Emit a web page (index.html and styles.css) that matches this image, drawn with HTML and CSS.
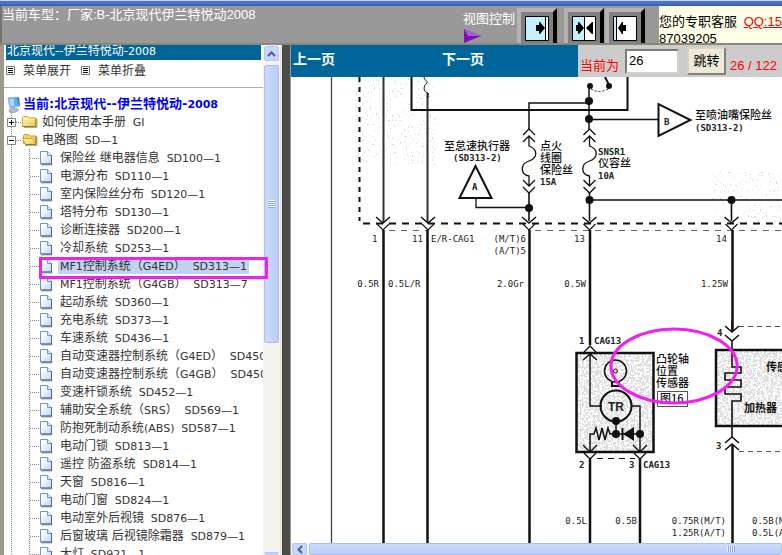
FILE: index.html
```html
<!DOCTYPE html>
<html lang="zh-CN">
<head>
<meta charset="utf-8">
<title>北京现代--伊兰特悦动-2008</title>
<link rel="stylesheet" href="styles.css">
</head>
<body>
<svg class="sprites" aria-hidden="true">
  <defs>
    <linearGradient id="paper" x1="0" y1="0" x2="1" y2="1">
      <stop offset="0.2" stop-color="#ffffff"/><stop offset="1" stop-color="#b5d6fb"/>
    </linearGradient>
    <linearGradient id="gold" x1="0" y1="0" x2="1" y2="1">
      <stop offset="0" stop-color="#fff6b0"/><stop offset="1" stop-color="#f3c843"/>
    </linearGradient>
    <symbol id="file" viewBox="0 0 16 16">
      <path d="M1.5 14.5h11" stroke="#aaa" stroke-width="2"/>
      <path d="M.5 1.500h7l4 4v8.500H.5z" fill="url(#paper)" stroke="#7191cd"/>
      <path d="M7.500 1.500v4h4" fill="#dbe8fb" stroke="#6f94d8"/>
      <path d="M11.500 5v9H1" fill="none" stroke="#5a6298"/>
    </symbol>
    <symbol id="folder" viewBox="0 0 16 16">
      <path d="M2 13.500h13V5" fill="none" stroke="#aaa"/>
      <path d="M.5 12.500v-9l1-1h4l1.500 1.500h6.500v8.500z" fill="url(#gold)" stroke="#d0a637"/>
      <path d="M1 5.500h12" stroke="#fffbd8"/>
      <path d="M1 12.500h13v-8" fill="none" stroke="#9c7a22"/>
    </symbol>
    <symbol id="folder-open" viewBox="0 0 16 16">
      <path d="M3 13.500h12V5" fill="none" stroke="#aaa"/>
      <path d="M1.500 11.500v-8l1-1h4l1.500 1.500h6v8.500z" fill="#f3d36a" stroke="#c59a30"/>
      <path d="M.5 6.500h10l3 6H3.500z" fill="url(#gold)" stroke="#d0a637"/>
      <path d="M3.500 12.500h10.500v-8" fill="none" stroke="#9c7a22"/>
    </symbol>
    <symbol id="lines" viewBox="0 0 9 9">
      <path d="M.5.5h8v8h-8z" fill="#fff" stroke="#777"/>
      <path d="M2 2.500h5M2 4.500h5M2 6.500h5" stroke="#111"/>
    </symbol>
  </defs>
</svg>

<div class="strip"></div>
<header class="top">
  <p class="model">当前车型：厂家:B-北京现代伊兰特悦动2008</p>
  <div class="view">
    <span>视图控制</span>
    <svg width="19" height="14" viewBox="0 0 19 14"><path d="M1 0l17 7-17 7z" fill="#7a12b4"/><path d="M1 0l17 7H5z" fill="#a95fd6"/></svg>
  </div>
  <div class="modes">
    <button class="mode" aria-label="显示目录">
      <svg width="24" height="25" viewBox="0 0 24 25"><path d="M.5.500h23v24H.5z" fill="#c3efff" stroke="#000"/><path d="M20 1h3v23h-3z" fill="#fff"/><path d="M20.500 0v25" stroke="#000"/><path d="M11 9h3V6h1l5 6-5 6h-1v-3h-3z"/></svg>
    </button>
    <button class="mode mode-split" aria-label="分栏显示">
      <svg width="24" height="25" viewBox="0 0 24 25"><path d="M.5.500h23v24H.5z" fill="#fff" stroke="#000"/><path d="M1 1h11v23H1z" fill="#c3efff"/><path d="M12.500 0v25" stroke="#000"/><path d="M4 9h2V6h1l5 6-5 6H6v-3H4zM21 6v12h-1l-6-6 6-6z"/></svg>
    </button>
    <button class="mode" aria-label="隐藏目录">
      <svg width="24" height="25" viewBox="0 0 24 25"><path d="M.5.500h23v24H.5z" fill="#fff" stroke="#000"/><path d="M1 1h2v23H1z" fill="#c3efff"/><path d="M3.500 0v25" stroke="#000"/><path d="M13 9h-3V6H9l-4 6 4 6h1v-3h3z"/></svg>
    </button>
  </div>
  <div class="service">
    <p>您的专职客服 <a href="#qq">QQ:15</a></p>
    <p>87039205</p>
  </div>
</header>

<main class="frames">
  <nav class="side">
    <div class="pane">
      <h1 class="side-title">北京现代--伊兰特悦动-<span class="en">2008</span></h1>
      <div class="tools">
        <svg width="9" height="9"><use href="#lines"/></svg><a href="#open">菜单展开</a>
        <svg width="9" height="9"><use href="#lines"/></svg><a href="#fold">菜单折叠</a>
      </div>
      <ul class="tree">
        <li class="root">
          <svg width="14" height="17" viewBox="0 0 14 17"><path d="M3 13l6-1 3 2-5 3-5-1z" fill="#b9b9c4" stroke="#8a8a98" stroke-width=".6"/><path d="M1 2l9-1 2 9-9 2z" fill="#5bb0ee" stroke="#9ab7d4"/><path d="M2.500 3l4-.5 1 7-4 1z" fill="#a8dcfb"/><path d="M10 1l2 .5 1 8-1 .5z" fill="#3868b4"/></svg>
          <b>当前:北京现代--伊兰特悦动-<span class="en">2008</span></b>
        </li>
        <li class="book"><span class="toggle"><svg width="9" height="9" viewBox="0 0 9 9"><path d="M.5.500h8v8h-8z" fill="#fff" stroke="#848484"/><path d="M2 4.500h5M4.500 2v5" stroke="#000"/></svg></span><svg width="16" height="16"><use href="#folder"/></svg><a href="#gi">如何使用本手册 <span class="en">GI</span></a></li>
        <li class="book"><span class="toggle"><svg width="9" height="9" viewBox="0 0 9 9"><path d="M.5.500h8v8h-8z" fill="#fff" stroke="#848484"/><path d="M2 4.500h5" stroke="#000"/></svg></span><svg width="16" height="16"><use href="#folder-open"/></svg><a href="#sd1">电路图 <span class="en">SD—1</span></a></li>
        <li class="leaf"><svg width="16" height="16"><use href="#file"/></svg><a href="#1">保险丝 继电器信息 <span class="en">SD100—1</span></a></li>
        <li class="leaf"><svg width="16" height="16"><use href="#file"/></svg><a href="#2">电源分布 <span class="en">SD110—1</span></a></li>
        <li class="leaf"><svg width="16" height="16"><use href="#file"/></svg><a href="#3">室内保险丝分布 <span class="en">SD120—1</span></a></li>
        <li class="leaf"><svg width="16" height="16"><use href="#file"/></svg><a href="#4">塔特分布 <span class="en">SD130—1</span></a></li>
        <li class="leaf"><svg width="16" height="16"><use href="#file"/></svg><a href="#5">诊断连接器 <span class="en">SD200—1</span></a></li>
        <li class="leaf"><svg width="16" height="16"><use href="#file"/></svg><a href="#6">冷却系统 <span class="en">SD253—1</span></a></li>
        <li class="leaf"><svg width="16" height="16"><use href="#file"/></svg><a href="#7" class="current"><span class="en">MF1</span>控制系统（<span class="en">G4ED</span>） <span class="en">SD313—1</span></a></li>
        <li class="leaf"><svg width="16" height="16"><use href="#file"/></svg><a href="#8"><span class="en">MF1</span>控制系统（<span class="en">G4GB</span>） <span class="en">SD313—7</span></a></li>
        <li class="leaf"><svg width="16" height="16"><use href="#file"/></svg><a href="#9">起动系统 <span class="en">SD360—1</span></a></li>
        <li class="leaf"><svg width="16" height="16"><use href="#file"/></svg><a href="#10">充电系统 <span class="en">SD373—1</span></a></li>
        <li class="leaf"><svg width="16" height="16"><use href="#file"/></svg><a href="#11">车速系统 <span class="en">SD436—1</span></a></li>
        <li class="leaf"><svg width="16" height="16"><use href="#file"/></svg><a href="#12">自动变速器控制系统（<span class="en">G4ED</span>） <span class="en">SD450—1</span></a></li>
        <li class="leaf"><svg width="16" height="16"><use href="#file"/></svg><a href="#13">自动变速器控制系统（<span class="en">G4GB</span>） <span class="en">SD450—7</span></a></li>
        <li class="leaf"><svg width="16" height="16"><use href="#file"/></svg><a href="#14">变速杆锁系统 <span class="en">SD452—1</span></a></li>
        <li class="leaf"><svg width="16" height="16"><use href="#file"/></svg><a href="#15">辅助安全系统（<span class="en">SRS</span>） <span class="en">SD569—1</span></a></li>
        <li class="leaf"><svg width="16" height="16"><use href="#file"/></svg><a href="#16">防抱死制动系统<span class="en">(ABS)</span> <span class="en">SD587—1</span></a></li>
        <li class="leaf"><svg width="16" height="16"><use href="#file"/></svg><a href="#17">电动门锁 <span class="en">SD813—1</span></a></li>
        <li class="leaf"><svg width="16" height="16"><use href="#file"/></svg><a href="#18">遥控 防盗系统 <span class="en">SD814—1</span></a></li>
        <li class="leaf"><svg width="16" height="16"><use href="#file"/></svg><a href="#19">天窗 <span class="en">SD816—1</span></a></li>
        <li class="leaf"><svg width="16" height="16"><use href="#file"/></svg><a href="#20">电动门窗 <span class="en">SD824—1</span></a></li>
        <li class="leaf"><svg width="16" height="16"><use href="#file"/></svg><a href="#21">电动室外后视镜 <span class="en">SD876—1</span></a></li>
        <li class="leaf"><svg width="16" height="16"><use href="#file"/></svg><a href="#22">后窗玻璃 后视镜除霜器 <span class="en">SD879—1</span></a></li>
        <li class="leaf"><svg width="16" height="16"><use href="#file"/></svg><a href="#23">大灯 <span class="en">SD921—1</span></a></li>
      </ul>
    </div>
    <div class="vbar">
      <span class="arrow"><svg width="9" height="6" viewBox="0 0 9 6"><path d="M1 5l3.500-3.500L8 5" fill="none" stroke="#4d6185" stroke-width="2"/></svg></span>
      <span class="vthumb"><i class="vgrip"></i></span>
      <span class="arrow arrow-down"></span>
    </div>
    <div class="mark"></div>
  </nav>
  <div class="splitter"></div>
  <section class="view-frame">
    <form class="pager">
      <div class="steps"><a href="#prev">上一页</a><a href="#next">下一页</a></div>
      <div class="jump">
        <label for="page">当前为</label>
        <input id="page" type="text" value="26">
        <button type="button">跳转</button>
        <span class="count">26 / 122</span>
      </div>
    </form>
    <div class="sheet">
      <svg class="circuit" width="491" height="466" viewBox="291 77 491 466">
        <defs>
          <filter id="grain" x="0" y="0" width="1" height="1">
            <feTurbulence type="fractalNoise" baseFrequency="0.45" numOctaves="2" seed="4"/>
            <feColorMatrix values="0 0 0 0 .72  0 0 0 0 .72  0 0 0 0 .72  12 0 0 0 -5.400"/>
          </filter>
          <filter id="dust" x="0" y="0" width="1" height="1">
            <feTurbulence type="fractalNoise" baseFrequency="0.5" numOctaves="1" seed="9"/>
            <feColorMatrix values="0 0 0 0 .65  0 0 0 0 .65  0 0 0 0 .65  12 0 0 0 -8"/>
          </filter>
          <g id="plug" fill="none" stroke="#111">
            <path d="M-7-9L0-3l7-6" stroke-width="1.500"/><path d="M-6-2l6 6 6-6" stroke-width="1.200"/>
          </g>
          <g id="fuse" fill="none" stroke="#111" stroke-width="1.300">
            <path d="M-6 6l6-6 6 6M-6 13l6-6 6 6M0 7v10c9 3 9 12 0 15-9 3-9 13 0 15v10M-6 51l6 6 6-6M-6 58l6 6 6-6"/>
          </g>
        </defs>
        <rect x="356" y="77" width="80" height="88" filter="url(#dust)"/>
        <rect x="712" y="171" width="70" height="52" filter="url(#dust)"/>
        <rect x="577" y="353" width="76" height="98" filter="url(#grain)"/>
        <rect x="716" y="351" width="66" height="75" filter="url(#grain)"/>

        <g fill="none" stroke="#111">
          <path d="M331.500 77v466" stroke="#444" stroke-width="1.300"/>
          <path d="M359.500 77v144" stroke-width="2" stroke-dasharray="5 5"/>
          <path d="M363 223.500h419" stroke-width="2" stroke-dasharray="7 6"/>
          <path d="M389 230.500h38M535 230.500h247" stroke="#666" stroke-dasharray="6 6"/>
          <path d="M383.500 77v145M427.500 93v129" stroke="#333" stroke-width="2"/>
          <path d="M383.500 230v313M427.500 230v313M529.500 230v313M590 230v115M732.500 230v100" stroke-width="2.500"/>
          <path d="M424 77c0 3 4 4 3 6-4 3-4 9 1 10v5"/>
          <path d="M411.500 77v33h216V77" stroke-width="2"/>
          <path d="M589 86v43M529 129v-26h60M589 119.500h69" stroke-width="1.500"/>
          <path d="M591 89q8 5 17 0" stroke-dasharray="2 2"/><path d="M605 77l4 8" stroke-width="2"/>
          <path d="M529 192v29M589.500 192v29M589 200h193M731.500 200v21" stroke-width="1.600"/>
          <path d="M476 199v8.500h53" stroke-width="1.300"/>
          <path d="M475.500 166l16 32h-32z" stroke-width="2"/>
          <path d="M658.500 104v32l32-16z" stroke-width="2"/>
        </g>
        <use href="#fuse" x="529" y="129"/><use href="#fuse" x="589.500" y="129"/>
        <use href="#plug" x="383" y="226"/><use href="#plug" x="428" y="226"/><use href="#plug" x="529" y="226"/><use href="#plug" x="589.500" y="226"/><use href="#plug" x="731.500" y="226"/>
        <g fill="#111">
          <circle cx="590" cy="86" r="3"/><circle cx="609" cy="86" r="3"/>
          <circle cx="589" cy="101" r="4"/><circle cx="589" cy="119" r="4"/>
          <circle cx="529" cy="208" r="4"/><circle cx="589.500" cy="200" r="4"/><circle cx="731.500" cy="200" r="4"/>
        </g>

        <g fill="none" stroke="#111">
          <rect x="576.500" y="353" width="77" height="99" stroke-width="2.500"/>
          <path d="M584 352l6-6 6 6M583 360l7-6 7 6M590 354v52h12M632 406h8v46M583 445l7 7 7-7M633 445l7 7 7-7M584 453l6 6 6-6M634 453l6 6 6-6" stroke-width="1.400"/>
          <path d="M590 452v-18h4l2-6 3 12 3-12 3 12 3-12 2 6h5h24M616 420v14" stroke-width="1.500"/>
          <path d="M622.500 428v12" stroke-width="2"/>
          <circle cx="615.500" cy="371" r="11" stroke-width="1.500"/><circle cx="615.500" cy="371" r="2"/>
          <path d="M612 382v4h7v-4" stroke-width="2"/>
          <circle cx="616" cy="406" r="15.500" stroke-width="2"/>
          <path d="M590 459v84M640 459v84" stroke-width="2.500"/>
          <path d="M597 458.500h38" stroke-dasharray="6 5"/>
          <rect x="657.500" y="391.500" width="30" height="15" stroke="#555"/>
          <path d="M782 350H716v76h66" stroke-width="2.500"/>
          <path d="M732 321v11M725 326l7 6 7-6M725 335l7 6 7-6M732 341v26h9v6h-16v7h16v7h-16v7h16v7h-9v37M725 443l7-6 7 6M725 450l7-6 7 6" stroke-width="1.600"/>
          <path d="M732.500 445v98" stroke-width="2.500"/>
          <path d="M739 326.500h43M739 451.500h43" stroke="#555" stroke-dasharray="5 4"/>
        </g>
        <g fill="#111"><circle cx="616" cy="421" r="4"/><circle cx="616" cy="434" r="4"/><circle cx="640" cy="434" r="4"/><path d="M634 427v14l-11-7z"/></g>

        <g class="cn">
          <text x="444" y="150">至怠速执行器</text>
          <text x="695" y="119">至喷油嘴保险丝</text>
          <text x="540" y="150">点火</text><text x="540" y="162">线圈</text><text x="540" y="174">保险丝</text>
          <text x="598" y="167">仪容丝</text>
          <text x="656" y="363">凸轮轴</text><text x="656" y="375">位置</text><text x="656" y="387">传感器</text>
          <text x="660" y="403">图16</text>
          <text x="766" y="371" class="heavy">传感器</text><text x="744" y="412" class="heavy">加热器</text>
        </g>
        <g class="label">
          <text x="453" y="161">(SD313-2)</text><text x="695" y="131">(SD313-2)</text>
          <text x="472" y="190">A</text><text x="664" y="125">B</text>
          <text x="540" y="185">15A</text><text x="598" y="155">SNSR1</text><text x="598" y="179">10A</text>
          <text x="594" y="344">CAG13</text><text x="643" y="468">CAG13</text>
          <text x="579" y="344">1</text><text x="579" y="468">2</text><text x="629" y="468">3</text>
          <text x="717" y="336">4</text><text x="716" y="449">3</text>
          <text x="608" y="411" class="tr">TR</text>
        </g>
        <g class="wire">
          <text x="372" y="242">1</text><text x="412" y="242">11</text><text x="431" y="242">E/R-CAG1</text>
          <text x="526" y="242" class="end">(M/T)6</text><text x="526" y="254" class="end">(A/T)5</text>
          <text x="574" y="242">13</text><text x="716" y="242">14</text>
          <text x="379" y="287" class="end">0.5R</text><text x="388" y="287">0.5L/R</text><text x="524" y="287" class="end">2.0Gr</text>
          <text x="586" y="287" class="end">0.5W</text><text x="728" y="287" class="end">1.25W</text>
          <text x="587" y="524" class="end">0.5L</text><text x="637" y="524" class="end">0.5B</text>
          <text x="726" y="524" class="end">0.75R(M/T)</text><text x="726" y="536" class="end">1.25R(A/T)</text>
          <text x="752" y="524">0.5B(M/T)</text><text x="752" y="536">0.5L(A/T)</text>
        </g>
        <ellipse cx="674" cy="366" rx="63" ry="37" fill="none" stroke="#f020f0" stroke-width="3"/>
      </svg>
    </div>
    <div class="hbar">
      <span class="arrow"><svg width="6" height="9" viewBox="0 0 6 9"><path d="M5 1L1.500 4.500 5 8" fill="none" stroke="#4d6185" stroke-width="2"/></svg></span>
      <span class="hthumb"><i class="hgrip"></i></span>
    </div>
  </section>
</main>
</body>
</html>
```

FILE: styles.css
```css
* { box-sizing: border-box; }

body {
  margin: 0;
  height: 100vh;
  overflow: hidden;
  display: flex;
  flex-direction: column;
  background: #999;
  font-family: "Liberation Sans", "Noto Sans CJK SC", sans-serif;
  font-size: 13px;
}

p, ul, h1 { margin: 0; padding: 0; }
a { color: inherit; text-decoration: none; }
svg { display: block; flex: none; }
.sprites { position: absolute; width: 0; height: 0; }

.strip {
  flex: none;
  height: 6px;
  background: linear-gradient(#c9d6f0 0 1px, #4a74cc 1px 4px, #3b62b8 4px);
}

/* top bar */
.top {
  flex: none;
  display: flex;
  height: 37px;
  overflow: hidden;
  border-left: 2px solid #77746a;
  background: #999;
  color: #fff;
}
.model { flex: 1; line-height: 17px; white-space: nowrap; }
.view { width: 54px; padding-top: 4px; line-height: 17px; white-space: nowrap; }
.view svg { margin-top: 2px; }
.modes { display: flex; padding-top: 2px; margin-right: 14px; }
.mode {
  flex: none;
  display: flex;
  align-items: flex-start;
  width: 40px;
  height: 44px;
  padding: 4px 4px 0;
  border: 4px solid;
  border-color: #b3b3b3 #000 #000 #b3b3b3;
  background: #808080;
}
.mode-split { margin-left: 7px; margin-right: 1px; }
.service {
  width: 123px;
  overflow: hidden;
  padding-top: 7px;
  background: #ffffe8;
  color: #000;
  line-height: 17px;
  white-space: nowrap;
}
.service a { margin-left: 3px; color: #f00; text-decoration: underline; }

/* frames */
.frames {
  flex: 1;
  min-height: 0;
  display: flex;
  border-top: 2px solid #8a8778;
}
.side {
  position: relative;
  flex: none;
  width: 282px;
  display: flex;
  border-left: 4px solid #9c998b;
  background: #fff;
}
.pane {
  flex: 1;
  min-width: 0;
  overflow: hidden;
  color: #333;
  font-family: "DejaVu Sans", "Noto Sans CJK SC", sans-serif;
  font-size: 12px;
}
.en { font-size: 11px; }
.side-title {
  height: 15px;
  margin: 0 2px;
  padding-left: 1px;
  overflow: hidden;
  background: #069;
  color: #fff;
  font-size: 12px;
  font-weight: 400;
  line-height: 12px;
  white-space: nowrap;
}
.tools {
  display: flex;
  align-items: center;
  gap: 8px;
  height: 28px;
  margin-bottom: 7px;
  padding: 0 2px 8px;
  border-bottom: 1px solid #aaa;
}
.tools svg { margin-top: 2px; }
.tools a + svg { margin-left: 2px; }
.tree { list-style: none; }
.tree li {
  display: flex;
  align-items: center;
  height: 18px;
  line-height: 18px;
  white-space: nowrap;
}
.root { padding-left: 3px; color: #00f; }
.root b { margin-left: 2px; font-size: 13px; }
.toggle {
  flex: none;
  display: flex;
  align-items: center;
  width: 15px;
  height: 18px;
  margin-left: 3px;
  background:
    repeating-linear-gradient(#888 0 1px, transparent 1px 2px) 4px 0 / 1px 100% no-repeat,
    repeating-linear-gradient(90deg, #888 0 1px, transparent 1px 2px) 9px 9px / 6px 1px no-repeat;
}
.book a { margin-left: 4px; }
.leaf::before {
  content: "";
  flex: none;
  width: 36px;
  height: 18px;
  background:
    repeating-linear-gradient(#888 0 1px, transparent 1px 2px) 7px 0 / 1px 100% no-repeat,
    repeating-linear-gradient(#888 0 1px, transparent 1px 2px) 25px 0 / 1px 100% no-repeat,
    repeating-linear-gradient(90deg, #888 0 1px, transparent 1px 2px) 26px 9px / 10px 1px no-repeat;
}
.leaf a { margin-left: 2px; padding: 0 2px; }
.leaf .current { height: 16px; line-height: 16px; background: #c1d2ee; }
.tree a .en:last-child { margin-left: 3px; }

.mark {
  position: absolute;
  top: 212px;
  left: 35px;
  width: 229px;
  height: 22px;
  border: 3px solid #f020f0;
}

/* scroll bars */
.vbar {
  flex: none;
  width: 19px;
  display: flex;
  flex-direction: column;
  gap: 4px;
  padding: 1px 3px 0 1px;
  border-right: 2px solid #ece9d8;
  background: #f5f4ee;
}
.arrow {
  flex: none;
  display: grid;
  place-items: center;
  width: 15px;
  height: 15px;
  border: 1px solid #b3c8f3;
  border-radius: 2px;
  background: #c6d6fc;
}
.arrow-down { height: 3px; }
.vthumb, .hthumb {
  display: grid;
  place-items: center;
  border: 1px solid #a9bff0;
  border-radius: 2px;
}
.vthumb {
  height: 278px;
  width: 15px;
  margin-bottom: auto;
  background: linear-gradient(90deg, #cbdafd, #bbcdf8);
}
.vgrip {
  width: 7px;
  height: 8px;
  background: repeating-linear-gradient(#f0f5ff 0 1px, #8fa9e4 1px 2px);
}
.splitter { flex: none; width: 8px; background: #4d4d4d; }
.hbar {
  flex: none;
  display: flex;
  gap: 2px;
  height: 12px;
  padding-left: 1px;
  overflow: hidden;
  background: #f5f4ee;
}
.hbar .arrow { height: 12px; }
.hthumb {
  flex: 1;
  padding-left: 370px;
  background: linear-gradient(#cbdafd, #bbcdf8);
}
.hgrip {
  width: 8px;
  height: 6px;
  background: repeating-linear-gradient(90deg, #f0f5ff 0 1px, #8fa9e4 1px 2px);
}

/* page viewer */
.view-frame {
  flex: 1;
  min-width: 0;
  display: flex;
  flex-direction: column;
  border-left: 1px solid #9c998b;
  background: #fff;
}
.pager { flex: none; display: flex; height: 32px; background: #069; }
.steps {
  flex: 1;
  display: flex;
  padding-left: 2px;
  color: #fff;
  font-size: 14px;
  font-weight: 700;
  line-height: 28px;
  white-space: nowrap;
}
.steps a:first-child { width: 149px; }
.jump {
  flex: none;
  display: flex;
  width: 204px;
  padding: 2px 0 0 2px;
  background: #ccc;
  color: #f00;
}
.jump label { width: 45px; line-height: 37px; }
.jump input {
  width: 54px;
  height: 25px;
  margin-top: 2px;
  padding: 0 2px 3px;
  border: 2px inset #d4d0c8;
  background: #fff;
  font: 13px "Liberation Sans", sans-serif;
}
.jump button {
  width: 39px;
  height: 28px;
  margin-left: 8px;
  padding: 0 0 4px;
  border: 2px outset #d8d4c6;
  background: #ece9d8;
  color: #000;
  font: 13px "Liberation Sans", "Noto Sans CJK SC", sans-serif;
}
.count { margin-left: 4px; line-height: 37px; white-space: nowrap; }
.sheet { flex: 1; min-height: 0; overflow: hidden; }

.cn { font: 500 11px "Noto Sans CJK SC", sans-serif; fill: #111; }
.cn .heavy { font-weight: 700; }
.label { font: 700 9px "DejaVu Sans Mono", monospace; fill: #222; }
.label .tr { font: 700 12px "Liberation Sans", sans-serif; }
.wire { font: 9px "DejaVu Sans Mono", monospace; fill: #222; }
.end { text-anchor: end; }
```
